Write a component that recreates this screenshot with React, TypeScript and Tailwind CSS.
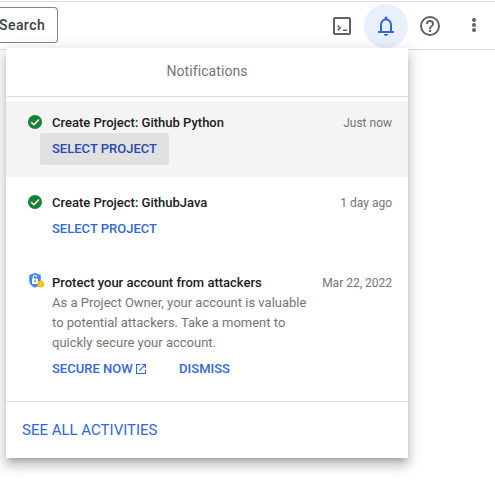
import type { ReactNode } from "react";

function CheckCircle() {
  return (
    <svg viewBox="0 0 14 14" className="mt-[14px] h-[14px] w-[14px] shrink-0">
      <circle cx="7" cy="7" r="7" fill="#188038" />
      <path d="M3.2 7.2 5.8 9.8 11 4.5" fill="none" stroke="#fff" strokeWidth="1.4" />
    </svg>
  );
}

function ShieldIcon() {
  return (
    <svg viewBox="0 0 18 18" className="-mr-1 mt-[11px] h-[18px] w-[18px] shrink-0">
      <path d="M7 1 1.200 2.900v5c0 3.900 2.400 6.400 5.800 7.700 3.400-1.300 5.800-3.800 5.800-7.700v-5z" fill="#4285f4" />
      <path d="M5.200 7V5.300a1.800 1.800 0 0 1 3.600 0" fill="none" stroke="#fff" strokeWidth="1.100" />
      <rect x="4" y="6.500" width="6" height="5.500" rx=".6" fill="#fff" />
      <circle cx="7" cy="9.200" r=".9" fill="#4285f4" />
      <circle cx="12.600" cy="11.900" r="3.500" fill="#fbbc04" />
      <path d="M12.600 10v2.200M12.600 13v.9" stroke="#fff" strokeWidth=".6" />
    </svg>
  );
}

function Row({ icon, title, time, active, children }: { icon: ReactNode; title: string; time: string; active?: boolean; children: ReactNode }) {
  return (
    <div className={`mt-1 flex min-h-[76px] pl-[22px] pr-4 ${active ? "bg-[#f4f4f4]" : ""}`}>
      {icon}
      <div className="ml-[10px] flex-1 pt-3">
        <div className="flex justify-between leading-5">
          <span className="text-[13px] font-medium text-[#202124]">{title}</span>
          <span className="text-[12px] text-[#757575]">{time}</span>
        </div>
        {children}
      </div>
    </div>
  );
}

export default function App() {
  return (
    <div className="relative h-[493px] w-[495px] overflow-hidden bg-white font-[Roboto,sans-serif]">
      <header className="mt-px flex h-[49px] items-center justify-between border-y border-[#dadce0]">
        <button className="mb-[2px] h-9 w-[58px] rounded-r-[4px] border border-l-0 border-[#80868b] pt-[2px] text-left text-[14px] font-medium text-[#3c4043]">
          <span className="-ml-px tracking-[0.45px]">Search</span>
        </button>
        <div className="flex items-center">
          <svg viewBox="0 0 18 18" className="mr-[13px] h-[18px] w-[18px]" fill="none" stroke="#5f6368" strokeWidth="2">
            <rect x="1" y="1" width="16" height="16" rx="1" />
            <path d="m4.700 8.700 2.500 2.300-2.500 2.300M10 13.300h4" strokeWidth="1.600" />
          </svg>
          <div className="flex h-11 w-11 items-center justify-center rounded-full bg-[#e8f0fe]">
            <svg viewBox="0 0 24 24" className="h-6 w-6" fill="#3367d6">
              <path d="M12 22c1.100 0 2-.9 2-2h-4c0 1.100.9 2 2 2zm6-5v-6c0-3.070-1.630-5.640-4.500-6.320V4a1.500 1.500 0 0 0-3 0v.68C7.640 5.360 6 7.920 6 11v6H4v2h16v-2h-2zm-2 0H8v-6c0-2.480 1.510-4.500 4-4.500s4 2.020 4 4.500v6z" />
            </svg>
          </div>
          <svg viewBox="0 0 24 24" className="ml-[10px] h-6 w-6" fill="#5f6368">
            <path d="M11 18h2v-2h-2v2zm1-16a10 10 0 1 0 0 20 10 10 0 0 0 0-20zm0 18a8 8 0 1 1 0-16 8 8 0 0 1 0 16zm0-14a4 4 0 0 0-4 4h2a2 2 0 1 1 4 0c0 2-3 1.750-3 5h2c0-2.250 3-2.500 3-5a4 4 0 0 0-4-4z" />
          </svg>
          <svg viewBox="0 0 4 16" className="mb-px ml-[30px] mr-[19px] h-4 w-1" overflow="visible" fill="#5f6368">
            <circle cx="2" cy="3" r="2" />
            <circle cx="2" cy="8" r="2" />
            <circle cx="2" cy="13" r="2" />
          </svg>
        </div>
      </header>

      <section className="absolute left-[6px] top-12 flex h-[410px] w-[402px] flex-col bg-white shadow-[0_5px_5px_-3px_rgba(0,0,0,0.2),0_8px_10px_1px_rgba(0,0,0,0.14),0_3px_14px_2px_rgba(0,0,0,0.12)]">
        <h2 className="h-[49px] border-b border-[#dadce0] text-center text-[14px] leading-[47px] tracking-[0.08px] text-[#757575]">Notifications</h2>
        <Row icon={<CheckCircle />} title="Create Project: Github Python" time="Just now" active>
          <button className="-ml-3 block h-8 w-[129px] rounded-[3px] bg-[#e1e1e1] pl-3 text-left text-[13px] font-medium text-[#2a49b0]">SELECT PROJECT</button>
        </Row>
        <Row icon={<CheckCircle />} title="Create Project: GithubJava" time="1 day ago">
          <button className="block h-8 text-[13px] font-medium text-[#3367d6]">SELECT PROJECT</button>
        </Row>
        <Row icon={<ShieldIcon />} title="Protect your account from attackers" time="Mar 22, 2022">
          <p className="text-[13px] leading-5 text-[#757575]">
            As a Project Owner, your account is valuable
            <br />
            to potential attackers. Take a moment to
            <br />
            quickly secure your account.
          </p>
          <div className="flex h-8 items-center text-[13px] font-medium text-[#3367d6]">
            <span>SECURE NOW</span>
            <svg viewBox="0 0 10 10" className="ml-[3px] h-[10px] w-[10px]" fill="none" stroke="#3367d6" strokeWidth="1.100">
              <path d="M4.500.55H.55v8.900h8.900V5.500M6 .55h3.450V4M9.400.6 3.200 6.800" />
            </svg>
            <span className="ml-[33.5px]">DISMISS</span>
          </div>
        </Row>
        <footer className="mt-auto h-[57px] border-t border-[#dadce0] pl-4 text-[15px] leading-[57px] text-[#3367d6]">SEE ALL ACTIVITIES</footer>
      </section>
    </div>
  );
}
